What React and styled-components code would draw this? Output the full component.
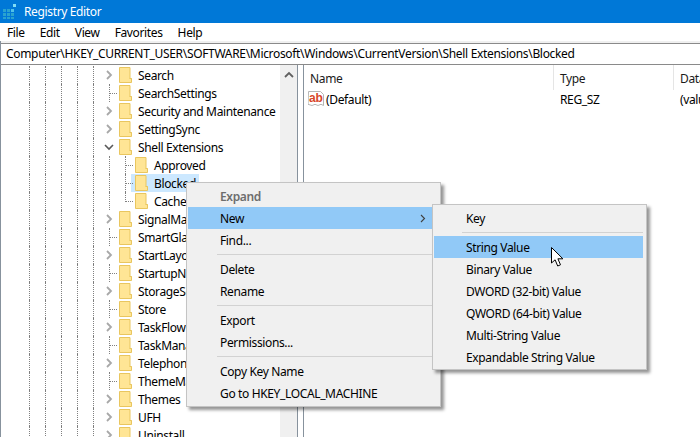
import * as React from "react"
import styled, { createGlobalStyle } from "styled-components"

const GlobalStyle = createGlobalStyle`
  html, body {
    margin: 0;
    padding: 0;
    background: #fff;
  }
`

const Window = styled.div`
  position: relative;
  display: flex;
  flex-direction: column;
  width: 700px;
  height: 437px;
  overflow: hidden;
  background: #fff;
  color: #000;
  font-family: "Noto Sans", "Open Sans", sans-serif;
  font-size: 12px;
  letter-spacing: -0.36px;
`

const TitleBar = styled.div`
  display: flex;
  align-items: center;
  gap: 7px;
  height: 23px;
  padding-left: 3px;
  background: #0078d7;
  color: #fff;
`

const MenuBar = styled.div`
  display: flex;
  align-items: center;
  height: 18px;
  padding-left: 7px;
  gap: 15px;
  background: #fff;
`

const Body = styled.div`
  display: flex;
  flex-direction: column;
  flex: 1;
  min-height: 0;
  border-left: 1px solid #87929d;
  background: #fff;
`

const AddressBar = styled.div`
  height: 20px;
  line-height: 19px;
  margin-top: 2px;
  padding-left: 5px;
  border-top: 1px solid #8a8a8a;
  border-bottom: 1px solid #8a8a8a;
  box-shadow: 0 -2px 0 #f0f0f0;
  white-space: nowrap;
  letter-spacing: -0.32px;
`

const Panes = styled.div`
  display: flex;
  flex: 1;
  min-height: 0;
`

const TreePane = styled.div`
  display: flex;
  width: 296px;
  border-right: 1px solid #87929d;
`

const Tree = styled.div`
  width: 279px;
  padding-top: 1px;
  overflow: hidden;
`

const Scrollbar = styled.div`
  display: flex;
  justify-content: center;
  width: 17px;
  padding-top: 6px;
  background: #f0f0f0;
`

const Row = styled.div`
  display: flex;
  align-items: stretch;
  height: 18px;
  padding-left: 28px;
  white-space: nowrap;
`

const Guide = styled.div`
  flex: none;
  width: 16px;
  border-left: 1px dotted #808080;
  box-sizing: border-box;
`

const Connector = styled.div`
  position: relative;
  flex: none;
  width: 10px;
  box-sizing: border-box;
  border-left: ${(p) => (p.$line ? "1px dotted #808080" : "none")};

  &::after {
    content: "";
    display: ${(p) => (p.$line ? "block" : "none")};
    position: absolute;
    left: 0;
    top: 9px;
    width: 7px;
    border-top: 1px dotted #808080;
  }
`

const ChildConnector = styled.div`
  position: relative;
  flex: none;
  width: 10px;
  height: ${(p) => (p.$last ? "10px" : "18px")};
  box-sizing: border-box;
  border-left: 1px dotted #808080;

  &::after {
    content: "";
    position: absolute;
    left: 0;
    top: 9px;
    width: 7px;
    border-top: 1px dotted #808080;
  }
`

const Arrow = styled.svg`
  position: absolute;
  left: -5px;
  top: 4px;
`

const Node = styled.div`
  display: flex;
  align-items: center;
  gap: 6px;
  height: 18px;
  background: ${(p) => (p.$selected ? "#cce8ff" : "transparent")};
  margin-left: ${(p) => (p.$selected ? "-4px" : "0")};
  padding: ${(p) => (p.$selected ? "0 3px 0 4px" : "0")};
`

const ListPane = styled.div`
  flex: 1;
  margin-left: 5px;
  border-left: 1px solid #87929d;
  min-width: 0;
  overflow: hidden;
`

const ListHeader = styled.div`
  display: grid;
  grid-template-columns: 250px 120px 60px;
  height: 25px;
`

const HeaderCell = styled.div`
  display: flex;
  align-items: center;
  padding: 1px 0 0 6px;
  color: #1a1a1a;
  border-right: 1px solid #e5e5e5;
  white-space: nowrap;
`

const ListRow = styled.div`
  display: grid;
  grid-template-columns: 250px 120px 60px;
  height: 18px;
`

const Cell = styled.div`
  display: flex;
  align-items: center;
  gap: 2px;
  padding-left: ${(p) => (p.$first ? "4px" : "6px")};
  white-space: nowrap;
  overflow: hidden;
`

const Menu = styled.div`
  position: absolute;
  left: ${(p) => p.$left}px;
  top: ${(p) => p.$top}px;
  width: ${(p) => p.$width}px;
  box-sizing: border-box;
  padding: 2px 3px ${(p) => p.$bottom}px 1px;
  background: #f0f0f0;
  border: 1px solid #c4c4c4;
  box-shadow: 3px 3px 3px rgba(0, 0, 0, 0.42);
`

const MenuItem = styled.div`
  position: relative;
  display: flex;
  align-items: center;
  height: 22px;
  padding-left: ${(p) => p.$indent}px;
  white-space: nowrap;
  background: ${(p) => (p.$active ? "#91c9f7" : "transparent")};
  color: ${(p) => (p.$dim ? "#6d6d6d" : "#000")};
  font-weight: ${(p) => (p.$dim ? 600 : 400)};
`

const MenuSeparator = styled.div`
  height: 1px;
  margin: 3px 0 3px ${(p) => p.$indent}px;
  background: #d2d2d2;
`

const SubArrow = styled.svg`
  position: absolute;
  right: 11px;
  top: 7px;
`

const Pointer = styled.svg`
  position: absolute;
  left: 551px;
  top: 247px;
`

const rows = [
  { name: "Search", arrow: true },
  { name: "SearchSettings" },
  { name: "Security and Maintenance", arrow: true },
  { name: "SettingSync", arrow: true },
  { name: "Shell Extensions", open: true },
  { name: "Approved", child: true },
  { name: "Blocked", child: true, selected: true },
  { name: "Cached", child: true, last: true },
  { name: "SignalManager", arrow: true },
  { name: "SmartGlass" },
  { name: "StartLayout", arrow: true },
  { name: "StartupNotify" },
  { name: "StorageSense", arrow: true },
  { name: "Store" },
  { name: "TaskFlow", arrow: true },
  { name: "TaskManager" },
  { name: "Telephony", arrow: true },
  { name: "ThemeManager" },
  { name: "Themes", arrow: true },
  { name: "UFH", arrow: true },
  { name: "Uninstall", arrow: true },
]

const contextItems = [
  ["Expand", "New", "Find..."],
  ["Delete", "Rename"],
  ["Export", "Permissions..."],
  ["Copy Key Name", "Go to HKEY_LOCAL_MACHINE"],
]

const valueItems = ["String Value", "Binary Value", "DWORD (32-bit) Value", "QWORD (64-bit) Value", "Multi-String Value", "Expandable String Value"]

function RegIcon() {
  const cells = []
  for (let y = 0; y < 3; y++) {
    for (let x = 0; x < 3; x++) {
      cells.push(<rect key={x + "-" + y} x={x * 4} y={5 + y * 4} width="3" height="3" fill={x === 2 && y === 0 ? "#4fc0e8" : "#2aa3cf"} />)
    }
  }
  return (
    <svg width="14" height="15" viewBox="0 0 14 15">
      {cells}
      <rect x="10" y="0" width="3" height="3" fill="#7fdcf5" />
    </svg>
  )
}

function Folder() {
  return (
    <svg width="13" height="16" viewBox="0 0 13 16" style={{ flex: "none" }}>
      <path d="M.5.5h10.5v11h1.5v4H.5z" fill="#ffe595" stroke="#e9c65f" />
      <path d="M10.5 11.5h2" stroke="#e9c65f" />
    </svg>
  )
}

function Chevron({ open }) {
  if (open) {
    return (
      <Arrow width="10" height="10" viewBox="0 0 10 10">
        <path d="M1 3l4 4 4-4" fill="none" stroke="#595959" strokeWidth="1.6" />
      </Arrow>
    )
  }
  return (
    <Arrow width="10" height="10" viewBox="0 0 10 10">
      <path d="M3 1l4 4-4 4" fill="none" stroke="#a8a8a8" strokeWidth="1.8" />
    </Arrow>
  )
}

function ValueIcon() {
  return (
    <svg width="16" height="16" viewBox="0 0 16 16" style={{ flex: "none" }}>
      <path d="M.5.5h12l3 3v11l-2.5-1.2-3 1.2-3-1.2-3 1.2-4-1.2z" fill="#fff" stroke="#b5b5b5" />
      <text x="1" y="10.5" fontFamily="Liberation Sans, sans-serif" fontSize="12" fontWeight="700" fill="#d8462a" letterSpacing="-0.2">ab</text>
    </svg>
  )
}

function TreeRow({ row }) {
  return (
    <Row>
      {[0, 1, 2, 3, 4].map((i) => <Guide key={i} />)}
      {row.child ? (
        <>
          <Guide />
          <ChildConnector $last={row.last} />
        </>
      ) : row.arrow || row.open ? (
        <Connector>{<Chevron open={row.open} />}</Connector>
      ) : (
        <Connector $line />
      )}
      <Node $selected={row.selected}>
        <Folder />
        <span>{row.name}</span>
      </Node>
    </Row>
  )
}

export default function App() {
  return (
    <Window>
      <GlobalStyle />
      <TitleBar>
        <RegIcon />
        <span>Registry Editor</span>
      </TitleBar>
      <MenuBar>
        <span>File</span>
        <span>Edit</span>
        <span>View</span>
        <span>Favorites</span>
        <span>Help</span>
      </MenuBar>
      <Body>
        <AddressBar>Computer\HKEY_CURRENT_USER\SOFTWARE\Microsoft\Windows\CurrentVersion\Shell Extensions\Blocked</AddressBar>
        <Panes>
          <TreePane>
            <Tree>
              {rows.map((row) => <TreeRow key={row.name} row={row} />)}
            </Tree>
            <Scrollbar>
              <svg width="10" height="8" viewBox="0 0 10 8">
                <path d="M1 6l4-4 4 4" fill="none" stroke="#606060" strokeWidth="1.8" />
              </svg>
            </Scrollbar>
          </TreePane>
          <ListPane>
            <ListHeader>
              <HeaderCell>Name</HeaderCell>
              <HeaderCell>Type</HeaderCell>
              <HeaderCell>Data</HeaderCell>
            </ListHeader>
            <ListRow>
              <Cell $first>
                <ValueIcon />
                <span>(Default)</span>
              </Cell>
              <Cell>REG_SZ</Cell>
              <Cell>(value not set)</Cell>
            </ListRow>
          </ListPane>
        </Panes>
      </Body>

      <Menu $left={186} $top={182} $width={255} $bottom={2}>
        {contextItems.map((group, i) => (
          <React.Fragment key={i}>
            {i > 0 && <MenuSeparator $indent={29} />}
            {group.map((label) => (
              <MenuItem key={label} $indent={32} $active={label === "New"} $dim={label === "Expand"}>
                {label}
                {label === "New" && (
                  <SubArrow width="6" height="9" viewBox="0 0 6 9">
                    <path d="M1 1l3.5 3.5L1 8" fill="none" stroke="#404040" strokeWidth="1.1" />
                  </SubArrow>
                )}
              </MenuItem>
            ))}
          </React.Fragment>
        ))}
      </Menu>

      <Menu $left={432} $top={204} $width={215} $bottom={1}>
        <MenuItem $indent={32}>Key</MenuItem>
        <MenuSeparator $indent={28} />
        {valueItems.map((label) => (
          <MenuItem key={label} $indent={32} $active={label === "String Value"}>{label}</MenuItem>
        ))}
      </Menu>

      <Pointer width="14" height="21" viewBox="0 0 14 21">
        <path d="M.5.5v15.5l3.6-3.2 2.6 6.2 2.8-1.2-2.6-6h5z" fill="#fff" stroke="#000" strokeWidth="1" />
      </Pointer>
    </Window>
  )
}
